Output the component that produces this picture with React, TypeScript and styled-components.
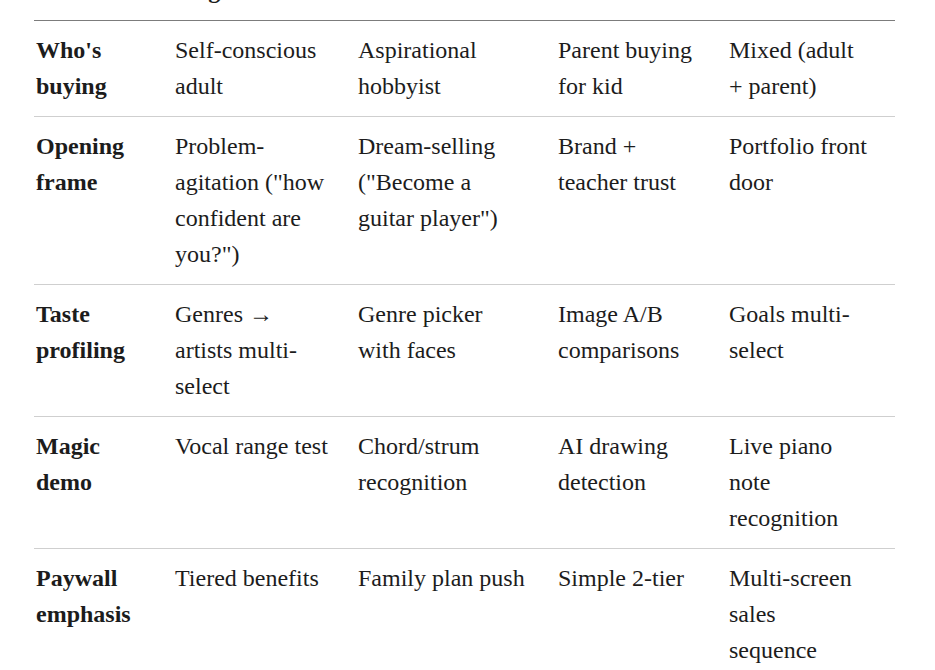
import styled, { createGlobalStyle } from 'styled-components';

const GlobalStyle = createGlobalStyle`
  html, body {
    margin: 0;
    padding: 0;
    background: #ffffff;
    overflow: hidden;
  }
`;

const Page = styled.div`
  width: 935px;
  height: 670px;
  overflow: hidden;
  padding-left: 34px;
  box-sizing: border-box;
  font-family: "Liberation Serif", "Times New Roman", serif;
  font-size: 24px;
  line-height: 36px;
  color: #1c1c1c;
`;

const Table = styled.table`
  width: 861px;
  margin-top: -75px;
  border-collapse: collapse;
  table-layout: fixed;
`;

const HeadRow = styled.tr`
  border-bottom: 1px solid #7c7c7c;
`;

const Row = styled.tr`
  border-bottom: 1px solid #cfcfcf;

  &:last-child {
    border-bottom: none;
  }
`;

const Cell = styled.td<{ $head?: boolean }>`
  padding: 11px 0 12px 2px;
  vertical-align: top;
  text-align: left;
  white-space: nowrap;
  font-weight: ${({ $head }) => ($head ? 700 : 400)};
`;

const columnWidths = [139, 183, 200, 171, 168];

const header: string[][] = [
  ['Dimension'],
  ['Simply', 'Sing'],
  ['Simply', 'Guitar'],
  ['Simply', 'Draw'],
  ['Simply', 'Piano'],
];

const rows: string[][][] = [
  [
    ["Who's", 'buying'],
    ['Self-conscious', 'adult'],
    ['Aspirational', 'hobbyist'],
    ['Parent buying', 'for kid'],
    ['Mixed (adult', '+ parent)'],
  ],
  [
    ['Opening', 'frame'],
    ['Problem-', 'agitation ("how', 'confident are', 'you?")'],
    ['Dream-selling', '("Become a', 'guitar player")'],
    ['Brand +', 'teacher trust'],
    ['Portfolio front', 'door'],
  ],
  [
    ['Taste', 'profiling'],
    ['Genres →', 'artists multi-', 'select'],
    ['Genre picker', 'with faces'],
    ['Image A/B', 'comparisons'],
    ['Goals multi-', 'select'],
  ],
  [
    ['Magic', 'demo'],
    ['Vocal range test'],
    ['Chord/strum', 'recognition'],
    ['AI drawing', 'detection'],
    ['Live piano', 'note', 'recognition'],
  ],
  [
    ['Paywall', 'emphasis'],
    ['Tiered benefits'],
    ['Family plan push'],
    ['Simple 2-tier'],
    ['Multi-screen', 'sales', 'sequence'],
  ],
];

const Lines = ({ lines }: { lines: string[] }) => (
  <>
    {lines.map((line, i) => (
      <span key={i}>
        {i > 0 && <br />}
        {line}
      </span>
    ))}
  </>
);

const App = () => (
  <Page>
    <GlobalStyle />
    <Table>
      <colgroup>
        {columnWidths.map((w, i) => (
          <col key={i} style={{ width: w }} />
        ))}
      </colgroup>
      <thead>
        <HeadRow>
          {header.map((lines, i) => (
            <Cell as="th" key={i} $head>
              <Lines lines={lines} />
            </Cell>
          ))}
        </HeadRow>
      </thead>
      <tbody>
        {rows.map((cells, r) => (
          <Row key={r}>
            {cells.map((lines, c) => (
              <Cell key={c} $head={c === 0}>
                <Lines lines={lines} />
              </Cell>
            ))}
          </Row>
        ))}
      </tbody>
    </Table>
  </Page>
);

export default App;
